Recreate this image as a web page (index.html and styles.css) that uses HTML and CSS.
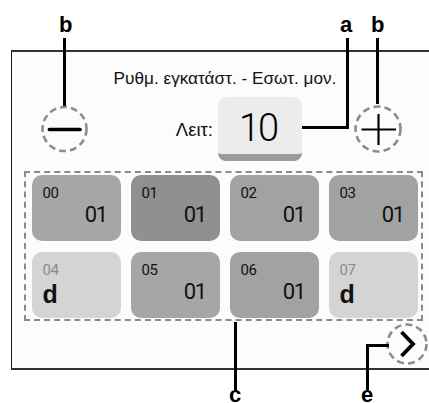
FILE: index.html
```html
<!DOCTYPE html>
<html>
<head>
<meta charset="utf-8">
<link rel="stylesheet" href="styles.css">
</head>
<body>
<div class="screen">
  <div class="content">
    <div class="title">Ρυθμ. εγκατάστ. - Εσωτ. μον.</div>
    <div class="controls">
      <div class="round minus">
        <svg width="48" height="48" viewBox="0 0 48 48"><circle class="dash" cx="24" cy="24" r="22.5"/><line x1="8.5" y1="24.5" x2="40" y2="24.5" stroke="#000" stroke-width="3.5" stroke-linecap="round"/></svg>
      </div>
      <div class="mode-label">Λειτ:</div>
      <div class="value">10</div>
      <div class="round plus">
        <svg width="48" height="48" viewBox="0 0 48 48"><circle class="dash" cx="24" cy="24" r="22.5"/><line x1="7.5" y1="24.5" x2="42" y2="24.5" stroke="#000" stroke-width="2.2"/><line x1="24.5" y1="9" x2="24.5" y2="40" stroke="#000" stroke-width="2.2"/></svg>
      </div>
    </div>
    <div class="grid">
      <div class="card c-mid"><span class="num">00</span><span class="val">01</span></div>
      <div class="card c-dark"><span class="num">01</span><span class="val">01</span></div>
      <div class="card c-mid2"><span class="num">02</span><span class="val">01</span></div>
      <div class="card c-mid2"><span class="num">03</span><span class="val">01</span></div>
      <div class="card c-light"><span class="num">04</span><span class="d">d</span></div>
      <div class="card c-mid"><span class="num">05</span><span class="val">01</span></div>
      <div class="card c-mid2"><span class="num">06</span><span class="val">01</span></div>
      <div class="card c-light"><span class="num">07</span><span class="d">d</span></div>
    </div>
    <div class="footer">
      <div class="round next">
        <svg width="42" height="42" viewBox="0 0 42 42"><circle class="dash" cx="21" cy="21" r="19.5"/><polyline points="15.5,9 27,21 15.5,33" fill="none" stroke="#000" stroke-width="3.8" stroke-linejoin="miter"/></svg>
      </div>
    </div>
  </div>
</div>

<div class="annot">
  <span class="lbl lbl-b1">b</span>
  <span class="lbl lbl-a">a</span>
  <span class="lbl lbl-b2">b</span>
  <span class="lbl lbl-c">c</span>
  <span class="lbl lbl-e">e</span>
  <div class="ln ln-b1"></div>
  <div class="ln ln-av"></div>
  <div class="ln ln-ah"></div>
  <div class="ln ln-b2"></div>
  <div class="ln ln-c"></div>
  <div class="ln ln-ev"></div>
  <div class="ln ln-eh"></div>
</div>
</body>
</html>
```

FILE: styles.css
```css
html, body {
  margin: 0;
  padding: 0;
}
body {
  width: 429px;
  height: 403px;
  overflow: hidden;
  position: relative;
  background: #ffffff;
  font-family: "Liberation Sans", Arial, sans-serif;
  color: #111;
}
.screen {
  margin-top: 50px;
  margin-left: 11px;
  width: 418px;
  height: 320px;
  box-sizing: border-box;
  border: 1px solid #1a1a1a;
  border-top: 2px solid #333;
  border-bottom: 2px solid #333;
  border-right: none;
  background: #fcfcfc;
}
.content {
  margin-left: 12px;
  width: 399px;
  padding-top: 16px;
  display: flex;
  flex-direction: column;
}
.title {
  font-size: 17.2px;
  line-height: 20px;
  text-align: center;
  padding-left: 3px;
  color: #111;
}
.controls {
  margin-top: 9px;
  display: flex;
  align-items: center;
  height: 64px;
}
.round {
  display: flex;
  align-items: center;
  justify-content: center;
}
.round svg { display: block; }
.dash {
  fill: none;
  stroke: #8c8c8c;
  stroke-width: 2.6;
  stroke-dasharray: 7 4.2;
}
.minus {
  margin-left: 17px;
  width: 47px;
  height: 48px;
}
.mode-label {
  width: 125px;
  text-align: right;
  font-size: 18.5px;
  line-height: 20px;
  padding-top: 2px;
}
.value {
  margin-left: 5px;
  width: 84px;
  height: 64px;
  box-sizing: border-box;
  background: #ececec;
  border-radius: 8px;
  border-bottom: 7px solid #9b9b9b;
  display: flex;
  align-items: center;
  justify-content: center;
  font-family: Roboto, "Liberation Sans", sans-serif;
  font-weight: 300;
  font-size: 38px;
  letter-spacing: -2px;
  padding-top: 4px;
  padding-right: 4px;
  color: #000;
}
.plus {
  margin-left: 52px;
  width: 48px;
  height: 48px;
}
.grid {
  margin-top: 10px;
  border: 2.5px dashed #8a8a8a;
  padding: 1.5px 3.5px 1.5px 5.5px;
  display: grid;
  grid-template-columns: repeat(4, 1fr);
  grid-auto-rows: 66px;
  column-gap: 10px;
  row-gap: 11px;
}
.card {
  border-radius: 10px;
  padding: 9px 14px 0 11px;
  display: flex;
  flex-direction: column;
  font-family: Roboto, "Liberation Sans", sans-serif;
  color: #111;
}
.c-mid { background: #a6a6a6; }
.c-mid2 { background: #a2a2a2; }
.c-dark { background: #909090; }
.c-light { background: #d4d4d4; }
.num {
  font-size: 15px;
  line-height: 18px;
  letter-spacing: -0.5px;
}
.c-light .num { color: #8a8a8a; }
.val {
  align-self: flex-end;
  font-size: 22px;
  line-height: 26px;
  letter-spacing: -1.5px;
}
.d {
  align-self: flex-start;
  font-family: "Liberation Sans", Arial, sans-serif;
  font-weight: bold;
  font-size: 25px;
  line-height: 30px;
}
.footer {
  margin-top: 2px;
  margin-right: -5px;
  display: flex;
  justify-content: flex-end;
}
.next {
  width: 42px;
  height: 42px;
}
.annot .lbl {
  position: absolute;
  font-family: "Liberation Sans", Arial, sans-serif;
  font-weight: bold;
  font-size: 22px;
  line-height: 22px;
  color: #000;
}
.lbl-b1 { left: 59px; top: 14px; }
.lbl-a { left: 340px; top: 14px; }
.lbl-b2 { left: 371px; top: 14px; }
.annot .lbl-c, .annot .lbl-e { line-height: 17px; top: 386px; }
.lbl-c { left: 229px; }
.lbl-e { left: 361px; }
.annot .ln {
  position: absolute;
  background: #000;
}
.ln-b1 { left: 63px; top: 38px; width: 3px; height: 68px; }
.ln-av { left: 346px; top: 38px; width: 3px; height: 91px; }
.ln-ah { left: 302px; top: 126px; width: 47px; height: 3px; }
.ln-b2 { left: 376px; top: 38px; width: 3px; height: 66px; }
.ln-c { left: 234px; top: 322px; width: 3px; height: 68px; }
.ln-ev { left: 366px; top: 344px; width: 3px; height: 46px; }
.ln-eh { left: 366px; top: 344px; width: 23px; height: 3px; }
```
